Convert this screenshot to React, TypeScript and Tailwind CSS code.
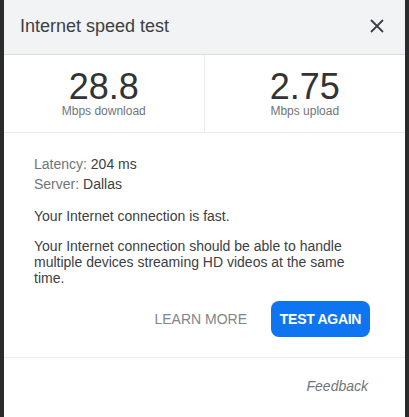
export default function App() {
  return (
    <div
      className="flex h-[417px] w-[409px] bg-[#2b2b2b] px-[4px]"
      style={{ fontFamily: '"Liberation Sans", Arial, sans-serif' }}
    >
      <div className="flex w-full flex-col bg-white">
        {/* header */}
        <div className="flex items-start justify-between border-b border-[#dadce0] bg-[#f1f3f4] pl-[16px] pr-[21px] pt-[14px] pb-[16px]">
          <h1 className="text-[18px] leading-[24px] text-[#3c4043]">Internet speed test</h1>
          <button type="button" className="mt-[5px] text-[#3c4043]" aria-label="Close">
            <svg width="14" height="14" viewBox="0 0 14 14" fill="none" stroke="currentColor" strokeWidth="1.8">
              <path d="M1 1L13 13M13 1L1 13" />
            </svg>
          </button>
        </div>

        {/* stats */}
        <div className="grid grid-cols-2 border-b border-[#ececec]">
          <div className="flex flex-col items-center border-r border-[#ececec] pt-[16px] pb-[14px]">
            <span className="text-[36px] leading-[32px] text-[#333]">28.8</span>
            <span className="mt-[1px] text-[12px] leading-[14px] text-[#70757a]">Mbps download</span>
          </div>
          <div className="flex flex-col items-center pt-[16px] pb-[14px]">
            <span className="text-[36px] leading-[32px] text-[#333]">2.75</span>
            <span className="mt-[1px] text-[12px] leading-[14px] text-[#70757a]">Mbps upload</span>
          </div>
        </div>

        {/* details */}
        <div className="flex flex-col px-[30px] pt-[21px] text-[14px] text-[#3c4043]">
          <p className="leading-[20px]">
            <span className="text-[#70757a]">Latency: </span>204 ms
          </p>
          <p className="leading-[20px]">
            <span className="text-[#70757a]">Server: </span>Dallas
          </p>
          <p className="mt-[14px] leading-[16px]">Your Internet connection is fast.</p>
          <p className="mt-[14px] leading-[16px]">
            Your Internet connection should be able to handle multiple devices streaming HD videos at the same time.
          </p>
          <div className="mt-[15px] flex items-center justify-end gap-[24px] pr-[5px]">
            <button type="button" className="text-[14px] leading-[20px] text-[#80868b]">
              LEARN MORE
            </button>
            <button
              type="button"
              className="flex h-[36px] w-[99px] items-center justify-center rounded-[8px] bg-[#0f74f0] text-[14px] font-bold tracking-[-0.3px] text-white"
            >
              TEST AGAIN
            </button>
          </div>
        </div>

        {/* footer */}
        <div className="mt-[20px] flex justify-end border-t border-[#ececec] pr-[37px] pt-[18px]">
          <span className="text-[14px] italic leading-[20px] text-[#70757a]">Feedback</span>
        </div>
      </div>
    </div>
  );
}
